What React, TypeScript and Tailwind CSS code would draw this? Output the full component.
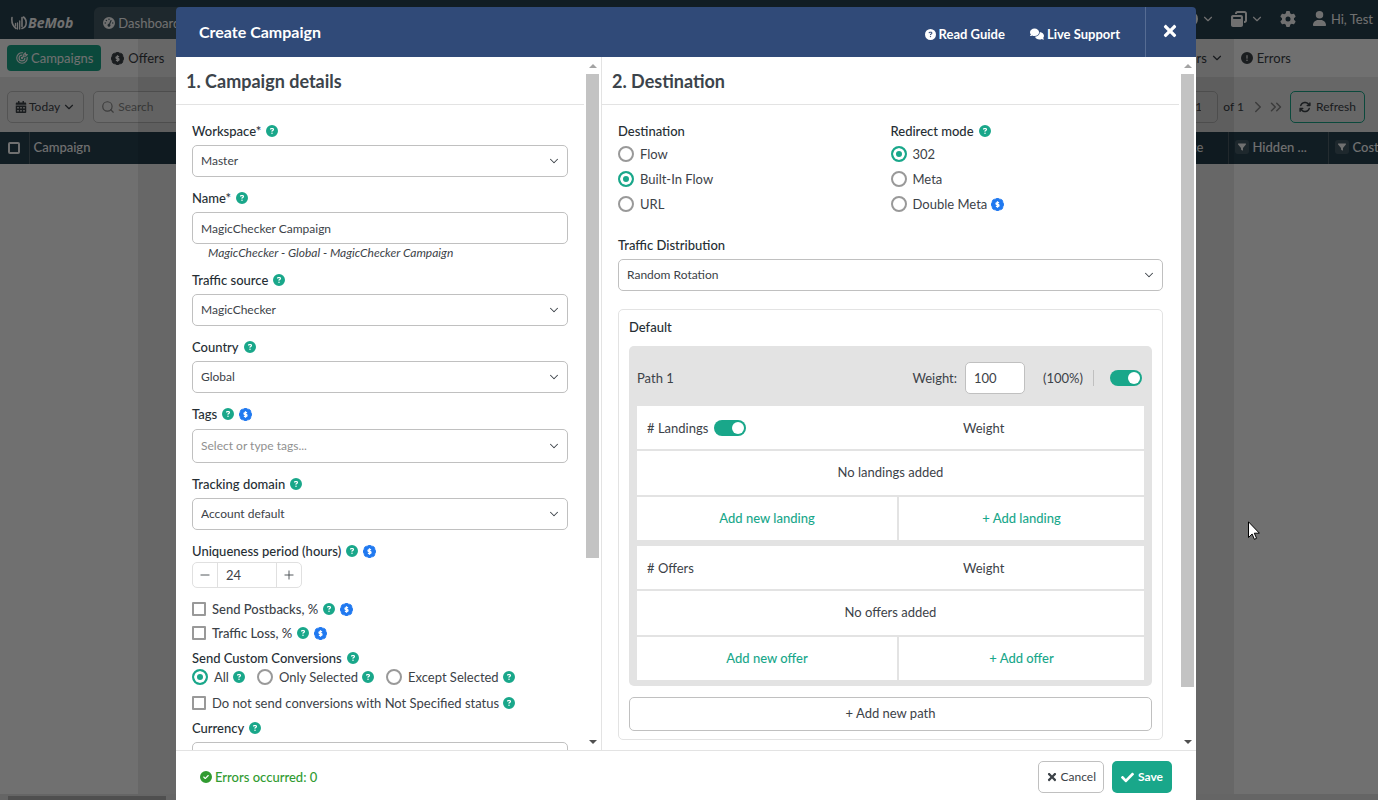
import type { ReactNode } from "react";
import { FaCalendarAlt, FaCheck, FaTimes } from "react-icons/fa";
import {
  FaArrowsRotate,
  FaCircleCheck,
  FaCircleExclamation,
  FaCircleQuestion,
  FaComments,
  FaFilter,
  FaGaugeHigh,
  FaGear,
  FaUser,
  FaWindowRestore,
} from "react-icons/fa6";
import { TbTargetArrow } from "react-icons/tb";
import {
  ChevronDown,
  ChevronRight,
  ChevronsRight,
  Minus,
  Plus,
  Search,
} from "lucide-react";

const Help = () => (
  <FaCircleQuestion className="size-3 shrink-0 text-[#19a78a]" />
);

const PaidBadge = ({ className }: { className: string }) => (
  <svg viewBox="2 2 20 20" className={className} aria-hidden="true">
    <path
      d="M3.85 8.62a4 4 0 0 1 4.78-4.77 4 4 0 0 1 6.74 0 4 4 0 0 1 4.78 4.78 4 4 0 0 1 0 6.74 4 4 0 0 1-4.77 4.78 4 4 0 0 1-6.75 0 4 4 0 0 1-4.78-4.77 4 4 0 0 1 0-6.76Z"
      fill="currentColor"
      stroke="currentColor"
    />
    <path
      d="M14.5 9.2h-3.4a1.4 1.4 0 0 0 0 2.8h1.8a1.4 1.4 0 0 1 0 2.8H9.5M12 17V7"
      fill="none"
      stroke="#fff"
      strokeWidth="2"
    />
  </svg>
);

const Paid = () => (
  <PaidBadge className="size-[13px] shrink-0 text-[#2079f0]" />
);

const Logo = () => (
  <svg viewBox="0 0 16 14" className="h-[14px] w-4" aria-hidden="true">
    <g fill="none" stroke="currentColor" strokeLinecap="round">
      <path d="M1 1.500c-.6 4.500.8 8.500 4 11" strokeWidth="1.600" />
      <path d="M4.500 7.500v2.500M6.500 7v6M8.700 5v8" strokeWidth="1.300" />
      <path
        d="M11 10.500V1.500M11 12.500c2.800-.8 4.200-3.200 4.200-6 0-2.300-1-4.200-2.700-5.500"
        strokeWidth="1.600"
      />
    </g>
  </svg>
);

const Label = ({
  htmlFor,
  paid,
  help = true,
  children,
}: {
  htmlFor: string;
  paid?: boolean;
  help?: boolean;
  children: ReactNode;
}) => (
  <div className="flex h-5 items-center gap-[5px]">
    <label htmlFor={htmlFor} className="font-medium text-[#262e34]">
      {children}
    </label>
    {help && <Help />}
    {paid && <Paid />}
  </div>
);

const Select = ({ id, value }: { id: string; value: string }) => (
  <div className="relative mt-1">
    <select
      id={id}
      defaultValue={value}
      className="block h-8 w-full appearance-none rounded-[5px] border border-[#c0c0c0] bg-white pr-8 pl-2 text-xs"
    >
      <option>{value}</option>
    </select>
    <ChevronDown
      className="pointer-events-none absolute top-[9px] right-[7px] size-[14px]"
      strokeWidth={1.75}
    />
  </div>
);

const Radio = ({
  name,
  label,
  checked,
}: {
  name: string;
  label: string;
  checked?: boolean;
}) => (
  <label className="flex items-center gap-[6px]">
    <input
      type="radio"
      name={name}
      defaultChecked={checked}
      className="size-4 shrink-0 appearance-none rounded-full border-2 border-[#999] bg-white checked:border-[#19a78a] checked:bg-[#19a78a] checked:shadow-[inset_0_0_0_3px_#fff]"
    />
    {label}
  </label>
);

const Checkbox = ({ label, strong }: { label: string; strong?: boolean }) => (
  <label
    className={
      strong
        ? "flex items-center gap-[6px] font-medium"
        : "flex items-center gap-[6px]"
    }
  >
    <input
      type="checkbox"
      className="size-[14px] shrink-0 appearance-none rounded-[1px] border-2 border-[#999] bg-white checked:bg-[#19a78a]"
    />
    {label}
  </label>
);

const Toggle = ({ label }: { label: string }) => (
  <input
    type="checkbox"
    role="switch"
    aria-label={label}
    defaultChecked
    className="flex h-4 w-8 shrink-0 appearance-none items-center rounded-full bg-[#bbb] px-[2px] before:size-3 before:rounded-full before:bg-white checked:justify-end checked:bg-[#19a78a]"
  />
);

const ScrollPane = ({
  title,
  thumb,
  children,
}: {
  title: string;
  thumb: number;
  children: ReactNode;
}) => (
  <div className="flex min-h-0">
    <div className="min-w-0 flex-1 overflow-y-auto [scrollbar-width:none]">
      <h2 className="flex h-12 items-center border-b border-[#e3e3e3] px-[10px] text-lg leading-5 font-bold text-[#3c444b]">
        {title}
      </h2>
      <div className="px-4 pt-4 pb-[10px]">{children}</div>
    </div>
    <div className="flex w-[17px] flex-col items-center">
      <div className="flex h-[17px] items-center">
        <div className="border-x-4 border-b-4 border-x-transparent border-b-[#a3a3a3]" />
      </div>
      <div className="w-full flex-1 px-[2px]">
        <div className="bg-[#c3c3c3]" style={{ height: `${thumb}%` }} />
      </div>
      <div className="flex h-[17px] items-center">
        <div className="border-x-4 border-t-4 border-x-transparent border-t-[#505050]" />
      </div>
    </div>
  </div>
);

const CampaignDetails = () => (
  <ScrollPane title="1. Campaign details" thumb={73.4}>
    <div className="flex flex-col gap-[11px]">
      <div>
        <Label htmlFor="workspace">Workspace*</Label>
        <Select id="workspace" value="Master" />
      </div>
      <div>
        <Label htmlFor="name">Name*</Label>
        <input
          id="name"
          type="text"
          defaultValue="MagicChecker Campaign"
          className="mt-1 block h-8 w-full rounded-[5px] border border-[#c0c0c0] px-2 text-xs"
        />
        <p className="h-[15px] px-4 text-xs leading-[18px] whitespace-nowrap italic">
          MagicChecker - Global - MagicChecker Campaign
        </p>
      </div>
      <div>
        <Label htmlFor="source">Traffic source</Label>
        <Select id="source" value="MagicChecker" />
      </div>
      <div>
        <Label htmlFor="country">Country</Label>
        <Select id="country" value="Global" />
      </div>
      <div>
        <Label htmlFor="tags" paid>
          Tags
        </Label>
        <div className="mt-[5px] flex h-[34px] items-center rounded-[5px] border border-[#c0c0c0] pr-[6px] pl-2">
          <input
            id="tags"
            type="text"
            placeholder="Select or type tags..."
            className="min-w-0 flex-1 text-xs placeholder:text-[#909090]"
          />
          <ChevronDown className="size-[14px]" strokeWidth={1.75} />
        </div>
      </div>
      <div>
        <Label htmlFor="domain">Tracking domain</Label>
        <Select id="domain" value="Account default" />
      </div>
      <div>
        <Label htmlFor="uniqueness" paid>
          Uniqueness period (hours)
        </Label>
        <div className="mt-px flex h-[26px] w-[110px] rounded-[5px] border border-[#e0e0e0]">
          <button
            type="button"
            aria-label="Decrease"
            className="flex w-6 items-center justify-center"
          >
            <Minus className="size-[14px]" strokeWidth={1.5} />
          </button>
          <input
            id="uniqueness"
            type="text"
            defaultValue="24"
            className="min-w-0 flex-1 border-x border-[#e0e0e0] px-2"
          />
          <button
            type="button"
            aria-label="Increase"
            className="flex w-6 items-center justify-center"
          >
            <Plus className="size-[14px]" strokeWidth={1.5} />
          </button>
        </div>
      </div>
    </div>

    <div className="mt-[9px]">
      <div className="flex h-6 items-center gap-[5px]">
        <Checkbox label="Send Postbacks, %" strong />
        <Help />
        <Paid />
      </div>
      <div className="flex h-6 items-center gap-[5px]">
        <Checkbox label="Traffic Loss, %" strong />
        <Help />
        <Paid />
      </div>
    </div>

    <fieldset className="mt-[3px]">
      <legend className="flex h-5 items-center gap-[5px] font-medium text-[#262e34]">
        Send Custom Conversions <Help />
      </legend>
      <div className="flex h-[18px] items-center gap-3 whitespace-nowrap">
        <div className="flex items-center gap-1">
          <Radio name="conversions" label="All" checked />
          <Help />
        </div>
        <div className="flex items-center gap-1">
          <Radio name="conversions" label="Only Selected" />
          <Help />
        </div>
        <div className="flex items-center gap-1">
          <Radio name="conversions" label="Except Selected" />
          <Help />
        </div>
      </div>
    </fieldset>
    <div className="mt-[7px] mb-[5px] flex h-5 items-center gap-1 whitespace-nowrap">
      <Checkbox label="Do not send conversions with Not Specified status" />
      <Help />
    </div>
    <Label htmlFor="currency">Currency</Label>
    <Select id="currency" value="USD" />
  </ScrollPane>
);

const ItemsTable = ({
  title,
  item,
  toggle,
}: {
  title: string;
  item: string;
  toggle?: boolean;
}) => (
  <table className="w-full table-fixed border-separate border-spacing-0 bg-white">
    <colgroup>
      <col className="w-[260px]" />
      <col className="w-14" />
      <col />
    </colgroup>
    <thead>
      <tr className="h-[43px] text-left">
        <th colSpan={2} className="px-[10px] font-normal">
          <div className="flex items-center gap-[6px]">
            # {title}
            {toggle && <Toggle label={title} />}
          </div>
        </th>
        <th className="px-[10px] font-normal">Weight</th>
      </tr>
    </thead>
    <tbody>
      <tr className="h-[46px] text-center">
        <td colSpan={3} className="border-t-2 border-[#e3e3e3] pb-[2px]">
          No {item}s added
        </td>
      </tr>
      <tr className="h-[45px] text-center font-medium text-[#19a78a]">
        <td className="border-t-2 border-[#e3e3e3] pb-[2px]">
          <button type="button">Add new {item}</button>
        </td>
        <td
          colSpan={2}
          className="border-t-2 border-l-2 border-[#e3e3e3] pb-[2px]"
        >
          <button type="button">+ Add {item}</button>
        </td>
      </tr>
    </tbody>
  </table>
);

const Destination = () => (
  <ScrollPane title="2. Destination" thumb={93}>
    <div className="grid grid-cols-2">
      <fieldset>
        <legend className="h-5 font-medium text-[#262e34]">Destination</legend>
        <div className="mt-[3px] flex flex-col gap-[5px]">
          <Radio name="destination" label="Flow" />
          <Radio name="destination" label="Built-In Flow" checked />
          <Radio name="destination" label="URL" />
        </div>
      </fieldset>
      <fieldset>
        <legend className="flex h-5 items-center gap-[5px] font-medium text-[#262e34]">
          Redirect mode <Help />
        </legend>
        <div className="mt-[3px] flex flex-col gap-[5px]">
          <Radio name="redirect" label="302" checked />
          <Radio name="redirect" label="Meta" />
          <div className="flex items-center gap-1">
            <Radio name="redirect" label="Double Meta" />
            <Paid />
          </div>
        </div>
      </fieldset>
    </div>

    <div className="mt-[21px]">
      <Label htmlFor="distribution" help={false}>
        Traffic Distribution
      </Label>
      <Select id="distribution" value="Random Rotation" />
    </div>

    <section className="mt-[18px] rounded-[5px] border border-[#e3e3e3] px-[10px] pt-[7px] pb-2">
      <h3 className="mb-[9px] font-medium text-[#262e34]">Default</h3>
      <div className="rounded-[5px] bg-[#e3e3e3] px-2 pb-[6px]">
        <div className="flex h-[60px] items-center pt-1 pr-[2px]">
          <span className="flex-1">Path 1</span>
          <label htmlFor="weight">Weight:</label>
          <input
            id="weight"
            type="text"
            defaultValue="100"
            className="ml-2 h-8 w-[60px] rounded-[5px] border border-[#c0c0c0] bg-white px-2"
          />
          <span className="ml-[18px]">(100%)</span>
          <span className="mr-4 ml-[10px] h-4 w-px bg-[#c0c0c0]" />
          <Toggle label="Path 1" />
        </div>
        <div className="flex flex-col gap-[6px]">
          <ItemsTable title="Landings" item="landing" toggle />
          <ItemsTable title="Offers" item="offer" />
        </div>
      </div>
      <button
        type="button"
        className="mt-[11px] h-[34px] w-full rounded-[5px] border border-[#c0c0c0] pb-[2px]"
      >
        + Add new path
      </button>
    </section>
  </ScrollPane>
);

const FilterButton = ({ label }: { label: string }) => (
  <button
    type="button"
    aria-label={label}
    className="flex size-[14px] shrink-0 items-center justify-center rounded-[3px] bg-[#465c68]"
  >
    <FaFilter className="size-2" />
  </button>
);

const Page = () => (
  <div className="flex h-full flex-col overflow-hidden whitespace-nowrap">
    <header className="flex h-[39px] shrink-0 items-center justify-between bg-[#284250] pr-[5px] pl-[11px] text-white">
      <div className="flex items-end self-stretch">
        <div className="mr-[21px] flex h-8 items-center gap-px">
          <Logo />
          <span className="font-['Open_Sans'] text-sm font-bold italic">
            BeMob
          </span>
        </div>
        <a
          href="#dashboard"
          className="flex h-8 items-center gap-[3px] rounded-t-md bg-[#465c68] px-[9px]"
        >
          <FaGaugeHigh className="size-3" />
          Dashboard
        </a>
      </div>
      <div className="flex items-center gap-4 pb-[2px]">
        <button type="button" aria-label="Help" className="flex items-center gap-[3px]">
          <FaCircleQuestion className="size-4" />
          <ChevronDown className="size-[14px]" />
        </button>
        <button type="button" aria-label="Workspaces" className="flex items-center gap-[3px]">
          <FaWindowRestore className="size-4" />
          <ChevronDown className="size-[14px]" />
        </button>
        <button type="button" aria-label="Settings">
          <FaGear className="size-4" />
        </button>
        <button type="button" className="flex items-center gap-1">
          <FaUser className="size-[15px]" />
          Hi, Test
        </button>
      </div>
    </header>

    <nav className="flex h-[38px] shrink-0 items-center justify-between bg-white pr-[87px] pl-[7px]">
      <div className="flex items-center gap-[10px]">
        <a
          href="#campaigns"
          className="flex h-[26px] items-center gap-[2px] rounded bg-[#19a78a] px-2 text-white"
        >
          <TbTargetArrow className="size-[14px]" />
          Campaigns
        </a>
        <a href="#offers" className="flex items-center gap-1">
          <PaidBadge className="size-[13px]" />
          Offers
        </a>
      </div>
      <div className="flex items-center gap-[17px]">
        <a href="#others" className="flex items-center gap-[3px]">
          Others
          <ChevronDown className="size-[14px]" />
        </a>
        <a href="#errors" className="flex items-center gap-1">
          <FaCircleExclamation className="size-3" />
          Errors
        </a>
      </div>
    </nav>

    <div className="flex h-[55px] shrink-0 items-center justify-between bg-[#ebebeb] pt-1 pr-[13px] pl-[7px] text-xs">
      <div className="flex gap-[9px]">
        <button
          type="button"
          className="flex h-8 items-center gap-[2px] rounded-[5px] border border-[#c0c0c0] px-[7px]"
        >
          <FaCalendarAlt className="size-3" />
          Today
          <ChevronDown className="size-[14px]" />
        </button>
        <div className="flex h-8 items-center gap-[3px] rounded-[5px] border border-[#c0c0c0] bg-[#f4f4f4] px-[7px]">
          <Search className="size-[14px] text-[#888]" />
          <input
            type="search"
            aria-label="Search"
            placeholder="Search"
            className="w-40 placeholder:text-[#888]"
          />
        </div>
      </div>
      <div className="flex items-center gap-[5px]">
        <input
          type="text"
          aria-label="Page"
          defaultValue="1"
          className="h-8 w-10 rounded-[5px] border border-[#c0c0c0] px-4"
        />
        <span>of 1</span>
        <div className="flex text-[#888]">
          <ChevronRight className="size-[18px]" />
          <ChevronsRight className="size-[18px]" />
        </div>
        <button
          type="button"
          className="flex h-8 items-center gap-[5px] rounded-[5px] border border-[#19a78a] px-2"
        >
          <FaArrowsRotate className="size-3" />
          Refresh
        </button>
      </div>
    </div>

    <div className="flex-1 bg-white">
      <table className="w-full table-fixed bg-[#284250] text-left text-white">
        <thead>
          <tr className="h-8">
            <th className="w-[29px] border-r border-[#53656f] pl-2">
              <input
                type="checkbox"
                aria-label="Select all"
                className="block size-3 appearance-none rounded-[2px] border-2 border-white"
              />
            </th>
            <th className="px-1 pb-[2px] font-medium">Campaign</th>
            <th className="w-[110px] border-r border-[#53656f] pr-6 pb-[2px] text-right font-medium">
              Source
            </th>
            <th className="w-[100px] border-r border-[#53656f] pb-[2px] pl-[6px] font-medium">
              <div className="flex items-center gap-1">
                <FilterButton label="Filter hidden" />
                Hidden ...
              </div>
            </th>
            <th className="w-[50px] overflow-hidden pb-[2px] pl-[6px] font-medium">
              <div className="flex items-center gap-1">
                <FilterButton label="Filter cost" />
                Cost
              </div>
            </th>
          </tr>
        </thead>
      </table>
    </div>
    <div className="h-[6px] shrink-0 bg-[#e6e6e6] px-2 pt-[2px]">
      <div className="h-full w-[158px] bg-[#b4b4b4]" />
    </div>
  </div>
);

const CampaignModal = () => (
  <div
    role="dialog"
    aria-label="Create Campaign"
    className="relative flex h-[calc(100vh-4px)] w-full max-w-[1020px] flex-col"
  >
    <div className="absolute -inset-x-[38px] top-8 bottom-[9px] bg-black/8" />
    <header className="relative flex h-[50px] shrink-0 items-center rounded-t bg-[#304a78] pl-[23px] font-bold text-white">
      <h1 className="flex-1 text-base">Create Campaign</h1>
      <a href="#guide" className="mt-1 flex items-center gap-[3px]">
        <FaCircleQuestion className="size-[11px]" />
        Read Guide
      </a>
      <a href="#support" className="mt-1 mr-[25px] ml-[25px] flex items-center gap-[3px]">
        <FaComments className="size-[14px]" />
        Live Support
      </a>
      <button
        type="button"
        aria-label="Close"
        className="flex w-[51px] items-center justify-center self-stretch border-l border-[#566c93] pr-[2px] pb-[2px]"
      >
        <FaTimes className="size-[18px]" />
      </button>
    </header>
    <div className="relative grid min-h-0 flex-1 grid-cols-[71fr_99fr] bg-white">
      <div className="grid min-h-0 border-r border-[#e3e3e3]">
        <CampaignDetails />
      </div>
      <Destination />
    </div>
    <footer className="relative flex h-[53px] shrink-0 items-center gap-2 border-t border-[#e3e3e3] bg-white px-6">
      <p className="flex flex-1 items-center gap-[3px] font-medium text-[#319b31]">
        <FaCircleCheck className="size-3" />
        Errors occurred: 0
      </p>
      <button
        type="button"
        className="flex h-8 items-center gap-[3px] rounded-[5px] border border-[#c0c0c0] px-[7px] text-xs"
      >
        <FaTimes className="size-3" />
        Cancel
      </button>
      <button
        type="button"
        className="flex h-8 items-center gap-1 rounded-[5px] bg-[#19a78a] px-[9px] text-xs font-bold text-white"
      >
        <FaCheck className="size-[13px]" />
        Save
      </button>
    </footer>
  </div>
);

const App = () => (
  <div className="relative h-screen overflow-hidden font-['Lato',sans-serif] text-[13px] leading-5 text-[#3c4248]">
    <Page />
    <div className="absolute inset-0 flex items-start justify-center overflow-hidden bg-black/56 pt-[7px] pr-[6px]">
      <CampaignModal />
    </div>
    <svg
      viewBox="0 0 12 19"
      className="pointer-events-none absolute top-[521px] left-[1248px] h-[19px] w-3"
      aria-hidden="true"
    >
      <path
        d="M.5.800v15.700l3.600-3.500 2.300 5.300 2.200-1-2.300-5.100h5.100z"
        fill="#fff"
        stroke="#000"
      />
    </svg>
  </div>
);

export default App;
